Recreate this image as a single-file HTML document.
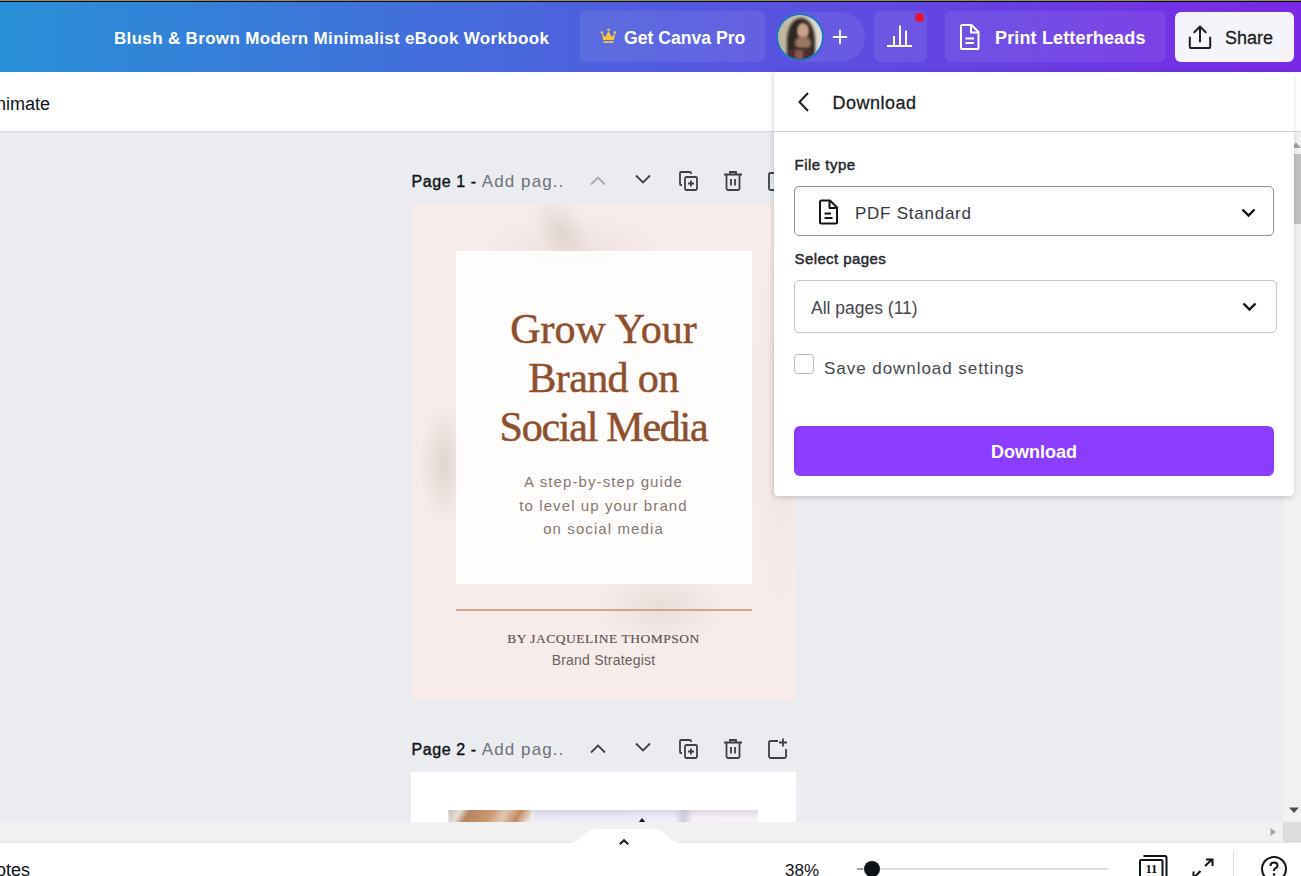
<!DOCTYPE html>
<html><head><meta charset="utf-8">
<style>
*{box-sizing:border-box;margin:0;padding:0}
html,body{width:1301px;height:876px;overflow:hidden;font-family:"Liberation Sans",sans-serif;background:#ebecef;position:relative}
.a{position:absolute}
.t{position:absolute;white-space:nowrap;line-height:1}
.sv{position:absolute;overflow:visible}
</style></head><body>
<!-- top bar -->
<div class="a" style="left:0;top:0;width:1301px;height:72px;background:linear-gradient(90deg,#2890d6 0%,#7a28e6 100%)"></div>
<div class="a" style="left:0;top:0;width:1301px;height:1px;background:#928c68"></div>
<div class="a" style="left:0;top:1px;width:1301px;height:1px;background:#0a0a14"></div>
<div class="t" style="left:114px;top:30.2px;font-size:17px;font-weight:bold;color:#fff;letter-spacing:0.33px">Blush &amp; Brown Modern Minimalist eBook Workbook</div>

<div class="a" style="left:580px;top:11px;width:185px;height:51px;background:rgba(255,255,255,0.08);border-radius:6px"></div>
<svg class="sv" style="left:600px;top:28px" width="17" height="16" viewBox="0 0 17 16">
  <circle cx="2" cy="4.5" r="1.3" fill="#f6c443"/><circle cx="8.5" cy="1.8" r="1.3" fill="#f6c443"/><circle cx="15" cy="4.5" r="1.3" fill="#f6c443"/>
  <path d="M2 5 L5.2 9 L8.5 3 L11.8 9 L15 5 L14 12 H3 Z" fill="#f6c443"/>
  <rect x="3.2" y="13.2" width="10.6" height="1.8" rx="0.5" fill="#f6c443"/>
</svg>
<div class="t" style="left:624px;top:30px;font-size:17.6px;font-weight:bold;color:#fff">Get Canva Pro</div>

<!-- avatar + plus pill -->
<div class="a" style="left:776px;top:12px;width:89px;height:50px;background:rgba(255,255,255,0.08);border-radius:25px"></div>
<div class="a" style="left:776px;top:13px;width:48px;height:48px;border-radius:50%;background:#1f74c8;overflow:hidden">
  <div class="a" style="left:1.6px;top:1.6px;width:44.8px;height:44.8px;border-radius:50%;overflow:hidden;background:linear-gradient(90deg,#bcb39a 0%,#c9c1aa 35%,#d9d4c4 75%,#e4e2d8 100%)">
    <div class="a" style="left:9px;top:3px;width:28px;height:46px;border-radius:48% 48% 30% 30%;background:#2e2621;filter:blur(1.5px)"></div>
    <div class="a" style="left:19px;top:8px;width:12px;height:16px;border-radius:50%;background:#c8a08b;filter:blur(1px)"></div>
    <div class="a" style="left:17px;top:22px;width:16px;height:12px;border-radius:40%;background:#9d7863;filter:blur(1.5px)"></div>
    <div class="a" style="left:10px;top:33px;width:24px;height:14px;border-radius:6px 6px 0 0;background:#4b2f33;filter:blur(1px)"></div>
    <div class="a" style="left:17px;top:35px;width:8px;height:10px;background:#8a5a4e;filter:blur(1.2px)"></div>
  </div>
</div>
<svg class="sv" style="left:831px;top:28px" width="18" height="18" viewBox="0 0 18 18">
  <path d="M9 1.8 V16.2 M1.8 9 H16.2" stroke="#fff" stroke-width="1.8" fill="none"/>
</svg>

<!-- analytics -->
<div class="a" style="left:874px;top:11px;width:53px;height:51px;background:rgba(255,255,255,0.08);border-radius:6px"></div>
<svg class="sv" style="left:886px;top:24px" width="28" height="24" viewBox="0 0 28 24">
  <path d="M1 22 H26 M8 22 V12 M14 22 V1.5 M20 22 V6.5" stroke="#fff" stroke-width="2" fill="none"/>
</svg>
<div class="a" style="left:915px;top:12.7px;width:9px;height:9px;border-radius:50%;background:#e8132b"></div>

<!-- print letterheads -->
<div class="a" style="left:945px;top:11px;width:221px;height:51px;background:rgba(255,255,255,0.08);border-radius:6px"></div>
<svg class="sv" style="left:959px;top:23px" width="22" height="28" viewBox="0 0 22 28">
  <path d="M3 2 H12.5 L19.5 9 V25 Q19.5 26 18.5 26 H3 Q2 26 2 25 V3 Q2 2 3 2 Z M12 2.5 V9.5 H19" stroke="#fff" stroke-width="2" fill="none" stroke-linejoin="round"/>
  <path d="M6.5 15.5 H15 M6.5 20 H15" stroke="#fff" stroke-width="2"/>
</svg>
<div class="t" style="left:995px;top:29.2px;font-size:18px;font-weight:bold;color:#fff;letter-spacing:0.15px">Print Letterheads</div>

<!-- share -->
<div class="a" style="left:1175px;top:12px;width:119px;height:50px;background:#f6f4fb;border-radius:6px"></div>
<svg class="sv" style="left:1187px;top:24px" width="26" height="26" viewBox="0 0 26 26">
  <path d="M2.8 13.5 V23 Q2.8 24 3.8 24 H22.2 Q23.2 24 23.2 23 V13.5 M13 17.5 V3 M7.3 8.3 L13 2.5 L18.7 8.3" stroke="#1c1d22" stroke-width="2" fill="none" stroke-linejoin="round" stroke-linecap="round"/>
</svg>
<div class="t" style="left:1225px;top:29.2px;font-size:18px;color:#1c1d22;-webkit-text-stroke:0.3px #1c1d22">Share</div>

<!-- toolbar 2 -->
<div class="a" style="left:0;top:72px;width:1301px;height:60px;background:#fff;border-bottom:1px solid #d9dadf"></div>
<div class="t" style="left:-16px;top:94.8px;font-size:18px;color:#0e1318">Animate</div>

<!-- vertical scrollbar -->
<div class="a" style="left:1283px;top:132px;width:18px;height:690px;background:#f1f1f1"></div>
<div class="a" style="left:1285px;top:154px;width:16px;height:70px;background:#c1c1c1"></div>
<svg class="sv" style="left:1290px;top:141px" width="12" height="8" viewBox="0 0 12 8"><path d="M1 7 H11 L6 1.5 Z" fill="#a3a3a3"/></svg>
<svg class="sv" style="left:1288px;top:806px" width="12" height="8" viewBox="0 0 12 8"><path d="M1 1.5 H11 L6 7 Z" fill="#505050"/></svg>

<!-- horizontal scrollbar -->
<div class="a" style="left:0;top:822px;width:1283px;height:21px;background:#f1f1f1"></div>
<div class="a" style="left:1283px;top:822px;width:18px;height:21px;background:#dcdcdc"></div>
<svg class="sv" style="left:1269px;top:827px" width="8" height="10" viewBox="0 0 8 10"><path d="M1.5 1 V9 L7 5 Z" fill="#a3a3a3"/></svg>

<!-- page 1 header -->
<div class="t" style="left:411.5px;top:172.5px;font-size:16px;color:#0e1318"><span style="letter-spacing:0.6px;-webkit-text-stroke:0.4px #0e1318">Page 1 -</span> <span style="color:#6c717b;font-size:17px;letter-spacing:1.1px;margin-left:0.5px">Add pag..</span></div>
<svg class="sv" style="left:588px;top:172px" width="20" height="16" viewBox="0 0 20 16"><path d="M3 12.5 L10 5.5 L17 12.5" stroke="#a7a9b0" stroke-width="1.8" fill="none"/></svg>
<svg class="sv" style="left:633px;top:171px" width="20" height="16" viewBox="0 0 20 16"><path d="M3 4.5 L10 11.5 L17 4.5" stroke="#3d4047" stroke-width="1.8" fill="none"/></svg>
<svg class="sv" style="left:677px;top:169px" width="24" height="24" viewBox="0 0 24 24">
  <path d="M5 16 H4 Q3 16 3 15 V4 Q3 3 4 3 H13 Q14 3 14 4 V5" stroke="#3d4047" stroke-width="1.8" fill="none"/>
  <rect x="8" y="8" width="12" height="13" rx="1.5" stroke="#3d4047" stroke-width="1.8" fill="none"/>
  <path d="M14 11.5 V17.5 M11 14.5 H17" stroke="#3d4047" stroke-width="1.8"/>
</svg>
<svg class="sv" style="left:721px;top:169px" width="24" height="24" viewBox="0 0 24 24">
  <path d="M3 5.5 H21 M9 5 V3 H15 V5 M5.5 6 V19.5 Q5.5 21 7 21 H17 Q18.5 21 18.5 19.5 V6" stroke="#3d4047" stroke-width="1.8" fill="none"/>
  <path d="M10 10 V16.5 M14 10 V16.5" stroke="#3d4047" stroke-width="1.8"/>
</svg>
<svg class="sv" style="left:766px;top:169px" width="24" height="24" viewBox="0 0 24 24">
  <path d="M12 4 H4.5 Q3 4 3 5.5 V19.5 Q3 21 4.5 21 H18.5 Q20 21 20 19.5 V12" stroke="#3d4047" stroke-width="1.8" fill="none"/>
  <path d="M17 1.5 V9.5 M13 5.5 H21" stroke="#3d4047" stroke-width="1.8"/>
</svg>

<!-- page 1 card -->
<div class="a" style="left:411px;top:204px;width:385px;height:497px;background:#f7ece9;overflow:hidden">
  <div class="a" style="left:70px;top:10px;width:180px;height:70px;border-radius:50%;background:radial-gradient(ellipse,rgba(150,130,130,0.10),rgba(150,130,130,0) 70%)"></div>
  <div class="a" style="left:125px;top:-15px;width:50px;height:80px;border-radius:50%;transform:rotate(-30deg);background:radial-gradient(ellipse,rgba(140,120,120,0.16),rgba(140,120,120,0) 70%)"></div>
  <div class="a" style="left:8px;top:200px;width:50px;height:120px;border-radius:50%;background:radial-gradient(ellipse,rgba(140,120,120,0.20),rgba(140,120,120,0) 70%)"></div>
  <div class="a" style="left:185px;top:365px;width:130px;height:75px;border-radius:50%;background:radial-gradient(ellipse,rgba(140,120,120,0.12),rgba(140,120,120,0) 70%)"></div>
  <div class="a" style="left:340px;top:30px;width:60px;height:380px;border-radius:50%;background:radial-gradient(ellipse,rgba(140,120,120,0.07),rgba(140,120,120,0) 70%)"></div>
  <div class="a" style="left:45px;top:47px;width:296px;height:333px;background:rgba(255,253,253,0.93)"></div>
  <div class="a" style="left:45px;top:405px;width:296px;height:2px;background:#d0a688"></div>
</div>
<div class="t" style="left:411px;width:385px;text-align:center;top:307.8px;font-family:'Liberation Serif',serif;font-size:42px;color:#8e502c;-webkit-text-stroke:0.5px #8e502c">Grow Your</div>
<div class="t" style="left:411px;width:385px;text-align:center;top:357.2px;font-family:'Liberation Serif',serif;font-size:42px;color:#8e502c;-webkit-text-stroke:0.5px #8e502c;letter-spacing:-0.6px">Brand on</div>
<div class="t" style="left:411px;width:385px;text-align:center;top:405.6px;font-family:'Liberation Serif',serif;font-size:42px;color:#8e502c;-webkit-text-stroke:0.5px #8e502c;letter-spacing:-1.25px">Social Media</div>
<div class="t" style="left:411px;width:385px;text-align:center;top:474.1px;font-size:15px;color:#85796f;letter-spacing:1.1px">A step-by-step guide</div>
<div class="t" style="left:411px;width:385px;text-align:center;top:498.3px;font-size:15px;color:#85796f;letter-spacing:1.1px">to level up your brand</div>
<div class="t" style="left:411px;width:385px;text-align:center;top:520.8px;font-size:15px;color:#85796f;letter-spacing:1.1px">on social media</div>
<div class="t" style="left:411px;width:385px;text-align:center;top:632px;font-family:'Liberation Serif',serif;font-size:13.5px;color:#5a524d;letter-spacing:0.5px;-webkit-text-stroke:0.15px #5a524d">BY JACQUELINE THOMPSON</div>
<div class="t" style="left:411px;width:385px;text-align:center;top:653.2px;font-size:14px;color:#6a625c;letter-spacing:0.2px">Brand Strategist</div>

<!-- page 2 header -->
<div class="t" style="left:411.5px;top:741px;font-size:16px;color:#0e1318"><span style="letter-spacing:0.6px;-webkit-text-stroke:0.4px #0e1318">Page 2 -</span> <span style="color:#6c717b;font-size:17px;letter-spacing:1.1px;margin-left:0.5px">Add pag..</span></div>
<svg class="sv" style="left:588px;top:740px" width="20" height="16" viewBox="0 0 20 16"><path d="M3 12.5 L10 5.5 L17 12.5" stroke="#3d4047" stroke-width="1.8" fill="none"/></svg>
<svg class="sv" style="left:633px;top:739px" width="20" height="16" viewBox="0 0 20 16"><path d="M3 4.5 L10 11.5 L17 4.5" stroke="#3d4047" stroke-width="1.8" fill="none"/></svg>
<svg class="sv" style="left:677px;top:737px" width="24" height="24" viewBox="0 0 24 24">
  <path d="M5 16 H4 Q3 16 3 15 V4 Q3 3 4 3 H13 Q14 3 14 4 V5" stroke="#3d4047" stroke-width="1.8" fill="none"/>
  <rect x="8" y="8" width="12" height="13" rx="1.5" stroke="#3d4047" stroke-width="1.8" fill="none"/>
  <path d="M14 11.5 V17.5 M11 14.5 H17" stroke="#3d4047" stroke-width="1.8"/>
</svg>
<svg class="sv" style="left:721px;top:737px" width="24" height="24" viewBox="0 0 24 24">
  <path d="M3 5.5 H21 M9 5 V3 H15 V5 M5.5 6 V19.5 Q5.5 21 7 21 H17 Q18.5 21 18.5 19.5 V6" stroke="#3d4047" stroke-width="1.8" fill="none"/>
  <path d="M10 10 V16.5 M14 10 V16.5" stroke="#3d4047" stroke-width="1.8"/>
</svg>
<svg class="sv" style="left:766px;top:737px" width="24" height="24" viewBox="0 0 24 24">
  <path d="M12 4 H4.5 Q3 4 3 5.5 V19.5 Q3 21 4.5 21 H18.5 Q20 21 20 19.5 V12" stroke="#3d4047" stroke-width="1.8" fill="none"/>
  <path d="M17 1.5 V9.5 M13 5.5 H21" stroke="#3d4047" stroke-width="1.8"/>
</svg>

<!-- page 2 card -->
<div class="a" style="left:411px;top:772px;width:385px;height:50px;background:#fff;overflow:hidden">
  <div class="a" style="left:37px;top:38px;width:310px;height:20px;background:linear-gradient(180deg,rgba(190,190,210,0.5),rgba(255,255,255,0) 40%),linear-gradient(90deg,#e8e6f0 0%,#f0eef8 73%,#d0cdd8 76%,#f7eff5 79%,#f8f1f6 100%)"></div>
  <div class="a" style="left:38px;top:38px;width:85px;height:20px;background:linear-gradient(120deg,#c8beb5 0%,#e8e0d8 12%,#b48560 22%,#c99770 45%,#e0c8b0 60%,#c08a62 75%,#f0ece8 90%)"></div>
  <svg class="sv" style="left:226px;top:45px" width="10" height="6" viewBox="0 0 10 6"><path d="M1 6 L5 1 L9 6 Z" fill="#1a1a1a"/></svg>
</div>

<!-- bottom bar -->
<div class="a" style="left:0;top:842px;width:1301px;height:34px;background:#fff;border-top:1px solid #e3e3e3"></div>
<!-- notch -->
<svg class="sv" style="left:568px;top:827px" width="114" height="17" viewBox="0 0 114 17">
  <path d="M0 16 Q8 16 14 10 Q20 2 30 2 H84 Q94 2 100 10 Q106 16 114 16 V17 H0 Z" fill="#fff"/>
</svg>
<svg class="sv" style="left:617px;top:836.5px" width="14" height="9" viewBox="0 0 14 9"><path d="M2.8 7.3 L7 3.2 L11.2 7.3" stroke="#1c1d22" stroke-width="1.9" fill="none"/></svg>

<div class="t" style="left:-17px;top:861px;font-size:18px;color:#0e1318">Notes</div>
<div class="t" style="left:785px;top:862.2px;font-size:17px;color:#0e1318">38%</div>
<div class="a" style="left:857px;top:868px;width:251px;height:2px;background:#dddddd"></div>
<div class="a" style="left:857px;top:868px;width:6px;height:2px;background:#a0a0a0"></div>
<div class="a" style="left:864px;top:861px;width:16px;height:16px;border-radius:50%;background:#0e1318"></div>
<svg class="sv" style="left:1136px;top:852px" width="34" height="26" viewBox="0 0 34 26">
  <path d="M7.5 4 H29 Q30.5 4 30.5 5.5 V26" stroke="#0e1318" stroke-width="2" fill="none"/>
  <rect x="4" y="8" width="22.5" height="20" rx="1" stroke="#0e1318" stroke-width="2" fill="none"/>
  <text x="15.3" y="20.5" font-family="Liberation Serif" font-size="12.5" font-weight="bold" text-anchor="middle" fill="#0e1318">11</text>
</svg>
<svg class="sv" style="left:1190px;top:856px" width="26" height="22" viewBox="0 0 26 22">
  <path d="M15 10 L22 3.5 M16 3.5 H22.5 V10 M10.5 15 L4 21.5 M3.5 15.5 V22 H10" stroke="#0e1318" stroke-width="2" fill="none"/>
</svg>
<div class="a" style="left:1233px;top:852px;width:1px;height:24px;background:#d8d8d8"></div>
<svg class="sv" style="left:1260px;top:855px" width="28" height="28" viewBox="0 0 28 28">
  <circle cx="14" cy="14" r="12" stroke="#0e1318" stroke-width="2" fill="none"/>
  <path d="M10.5 11 Q10.5 7.5 14 7.5 Q17.5 7.5 17.5 10.5 Q17.5 12.5 15 13.5 Q14 14 14 16" stroke="#0e1318" stroke-width="2" fill="none"/>
  <circle cx="14" cy="19.5" r="1.3" fill="#0e1318"/>
</svg>

<!-- download panel -->
<div class="a" style="left:774px;top:72px;width:520px;height:424px;background:#fff;border-radius:0 0 4px 4px;box-shadow:0 3px 6px -1px rgba(60,60,80,0.16),-2px 0 5px rgba(60,60,80,0.10),0 0 1px rgba(0,0,0,0.18)"></div>
<svg class="sv" style="left:794px;top:90px" width="20" height="24" viewBox="0 0 20 24"><path d="M14 3 L5.5 12 L14 21" stroke="#1c1d22" stroke-width="2" fill="none"/></svg>
<div class="t" style="left:832.5px;top:94px;font-size:18px;color:#1c1d22;letter-spacing:0.5px;-webkit-text-stroke:0.3px #1c1d22">Download</div>
<div class="a" style="left:774px;top:131px;width:520px;height:1px;background:#cfd0d4"></div>
<div class="t" style="left:794.5px;top:156.9px;font-size:15px;color:#24262b;letter-spacing:0.5px;-webkit-text-stroke:0.45px #24262b">File type</div>
<div class="a" style="left:794px;top:186px;width:480px;height:50px;border:1px solid #8d9097;border-radius:5px"></div>
<svg class="sv" style="left:818px;top:198px" width="22" height="28" viewBox="0 0 22 28">
  <path d="M3.5 2.5 H12 L19 9.5 V24 Q19 25.5 17.5 25.5 H3.5 Q2 25.5 2 24 V4 Q2 2.5 3.5 2.5 Z M11.5 3 V10 H18.5" stroke="#0e1318" stroke-width="2" fill="none" stroke-linejoin="round"/>
  <path d="M6.5 15.5 H13 M6.5 20 H14.5" stroke="#0e1318" stroke-width="2"/>
</svg>
<div class="t" style="left:855px;top:205.2px;font-size:17px;color:#35373d;letter-spacing:0.75px">PDF Standard</div>
<svg class="sv" style="left:1240px;top:206px" width="17" height="13" viewBox="0 0 17 13"><path d="M2.5 3.5 L8.5 9.5 L14.5 3.5" stroke="#0e1318" stroke-width="2.4" fill="none"/></svg>

<div class="t" style="left:794.5px;top:251.1px;font-size:15px;color:#24262b;letter-spacing:0.4px;-webkit-text-stroke:0.45px #24262b">Select pages</div>
<div class="a" style="left:794px;top:280px;width:483px;height:53px;border:1px solid #c3c5ca;border-radius:5px"></div>
<div class="t" style="left:811px;top:299.6px;font-size:17.5px;color:#46484e">All pages (11)</div>
<svg class="sv" style="left:1241px;top:300px" width="17" height="13" viewBox="0 0 17 13"><path d="M2.5 3.5 L8.5 9.5 L14.5 3.5" stroke="#0e1318" stroke-width="2.4" fill="none"/></svg>

<div class="a" style="left:794px;top:354px;width:20px;height:20px;border:1.5px solid #b4b6bb;border-radius:4px"></div>
<div class="t" style="left:824px;top:360px;font-size:17px;color:#46484e;letter-spacing:0.95px">Save download settings</div>

<div class="a" style="left:794px;top:426px;width:480px;height:50px;background:#8b3dff;border-radius:6px"></div>
<div class="t" style="left:794px;width:480px;text-align:center;top:442.8px;font-size:18px;font-weight:bold;color:#fff">Download</div>
</body></html>
